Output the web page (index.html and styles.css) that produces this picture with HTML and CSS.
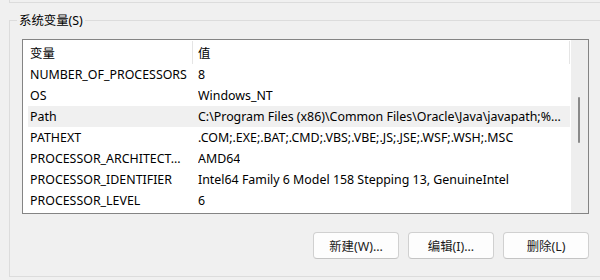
FILE: index.html
```html
<!DOCTYPE html>
<html lang="zh-CN">
<head>
    <meta charset="UTF-8">
    <title>系统变量</title>
    <link rel="stylesheet" href="styles.css">
</head>
<body>
    <div class="prev-group"></div>
    <div class="group">
        <span class="group-label">系统变量(S)</span>
        <div class="group-body">
            <div class="listbox">
                <div class="list">
                    <div class="list-head">
                        <div class="head-name">变量</div>
                        <div class="head-value">值</div>
                    </div>
                    <div class="row"><div class="name">NUMBER_OF_PROCESSORS</div><div class="value">8</div></div>
                    <div class="row"><div class="name">OS</div><div class="value">Windows_NT</div></div>
                    <div class="row selected"><div class="name">Path</div><div class="value">C:\Program Files (x86)\Common Files\Oracle\Java\javapath;%...</div></div>
                    <div class="row"><div class="name">PATHEXT</div><div class="value">.COM;.EXE;.BAT;.CMD;.VBS;.VBE;.JS;.JSE;.WSF;.WSH;.MSC</div></div>
                    <div class="row"><div class="name">PROCESSOR_ARCHITECT...</div><div class="value">AMD64</div></div>
                    <div class="row"><div class="name">PROCESSOR_IDENTIFIER</div><div class="value">Intel64 Family 6 Model 158 Stepping 13, GenuineIntel</div></div>
                    <div class="row"><div class="name">PROCESSOR_LEVEL</div><div class="value">6</div></div>
                </div>
                <div class="scrollbar">
                    <div class="thumb"></div>
                </div>
            </div>
            <div class="buttons">
                <button>新建(W)...</button>
                <button>编辑(I)...</button>
                <button>删除(L)</button>
            </div>
        </div>
    </div>
</body>
</html>
```

FILE: styles.css
```css
body {
    margin: 0;
    background-color: #f0f0f0;
    color: #000;
    font-family: "Noto Sans", "Noto Sans CJK SC", sans-serif;
    font-size: 12.4px;
    overflow: hidden;
}
.prev-group {
    margin-left: 9px;
    height: 2px;
    border-left: 1px solid #dcdcdc;
    border-bottom: 1px solid #dcdcdc;
}
.group {
    position: relative;
    margin: 17px -10px 0 9px;
    height: 255px;
    border: 1px solid #dcdcdc;
}
.group-label {
    position: absolute;
    top: -9px;
    left: 7px;
    padding: 0 2px;
    line-height: 18px;
    background-color: #f0f0f0;
}
.group-body {
    width: 567px;
    padding: 18px 0 0 12px;
}
.listbox {
    display: flex;
    box-sizing: border-box;
    height: 175px;
    border: 1px solid #848484;
    background-color: #fff;
}
.list {
    flex: 1;
    min-width: 0;
    overflow: hidden;
}
.list-head {
    display: flex;
    height: 24px;
    padding-top: 1px;
    box-sizing: border-box;
}
.head-name, .head-value {
    display: flex;
    align-items: center;
    border-right: 1px solid #e5e5e5;
}
.head-name {
    width: 162px;
    padding-left: 7px;
}
.head-value {
    flex: 1;
    padding-left: 5px;
    margin-right: 1px;
}
.row {
    display: flex;
    align-items: center;
    height: 21px;
    margin: 0 1px 0 5px;
    white-space: nowrap;
}
.row.selected {
    background-color: #f0f0f0;
}
.name {
    box-sizing: border-box;
    width: 170px;
    padding-left: 2px;
    flex-shrink: 0;
    overflow: hidden;
}
.value {
    overflow: hidden;
}
.scrollbar {
    position: relative;
    width: 17px;
    background-color: #eeeeee;
}
.thumb {
    position: absolute;
    left: 7px;
    top: 57px;
    width: 2px;
    height: 46px;
    border-radius: 1px;
    background-color: #8a8a8a;
}
.buttons {
    display: flex;
    justify-content: flex-end;
    gap: 9px;
    margin-top: 18px;
}
.buttons button {
    width: 86px;
    height: 27px;
    padding: 0;
    font-family: inherit;
    font-size: 12.4px;
    color: #1a1a1a;
    background-color: #fdfdfd;
    border: 1px solid #d0d0d0;
    border-bottom-color: #c4c4c4;
    border-radius: 4px;
}
```
